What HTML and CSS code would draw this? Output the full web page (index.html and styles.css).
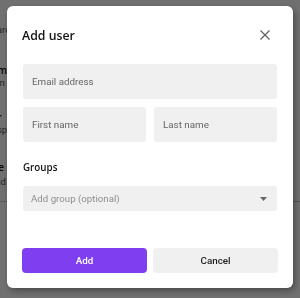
FILE: index.html
```html
<!DOCTYPE html>
<html lang="en">

<head>
    <meta charset="UTF-8" />
    <meta name="viewport" content="width=device-width, initial-scale=1.0" />
    <title>Add user</title>
    <link rel="stylesheet" href="styles.css">
</head>

<body>
    <!-- Page behind the dialog -->
    <div class="page">
        <div class="row first">
            <div class="row-sub">Share</div>
        </div>
        <div class="row">
            <div class="row-title">Tem</div>
            <div class="row-sub">Man</div>
        </div>
        <div class="row">
            <div class="row-title">Ser</div>
            <div class="row-sub">Resp</div>
        </div>
        <div class="row line">
            <div class="row-title">Use</div>
            <div class="row-sub">Hold</div>
        </div>
    </div>

    <!-- Dialog -->
    <div class="overlay">
        <div class="modal">
            <div class="modal-header">
                <h2 class="modal-title">Add user</h2>
                <button class="close-btn" aria-label="Close">
                    <svg width="10" height="10" viewBox="0 0 10 10">
                        <path d="M0.5 0.5 L9.5 9.5 M9.5 0.5 L0.5 9.5" stroke="#5f5f5f" stroke-width="1.2" fill="none" />
                    </svg>
                </button>
            </div>

            <div class="field">
                <input type="email" class="text-input" placeholder="Email address" />
            </div>
            <div class="field name-row">
                <input type="text" class="text-input" placeholder="First name" />
                <input type="text" class="text-input" placeholder="Last name" />
            </div>

            <div class="group-label">Groups</div>
            <div class="select">
                <span>Add group (optional)</span>
                <svg width="7" height="4" viewBox="0 0 7 4">
                    <path d="M0 0 L7 0 L3.5 4 Z" fill="#666" />
                </svg>
            </div>

            <div class="modal-actions">
                <button class="add-btn">Add</button>
                <button class="cancel-btn">Cancel</button>
            </div>
        </div>
    </div>
</body>

</html>
```

FILE: styles.css
```css
body {
    font-family: Roboto, "Liberation Sans", sans-serif;
    background-color: #ffffff;
    margin: 0;
    padding: 0;
    width: 300px;
    height: 298px;
    overflow: hidden;
}

/* background list, mostly hidden by the dialog */
.page {
    margin-left: -14px;
    padding-top: 23px;
    width: 314px;
}

.row {
    margin-top: 22px;
}

.row.first {
    margin-top: 0;
}

.row.first + .row {
    margin-top: 28px;
}

.row.line {
    margin-top: 25px;
    padding-bottom: 11px;
    border-bottom: 1px solid #c8c8c8;
}

.row-title {
    font-family: "Open Sans", sans-serif;
    font-weight: 600;
    font-size: 10px;
    line-height: 12px;
    color: #111;
}

.row-sub {
    font-size: 9.5px;
    line-height: 13px;
    color: #555;
}

.row.line .row-sub {
    line-height: 17px;
}

.overlay {
    position: fixed;
    inset: 0;
    background: rgba(0, 0, 0, 0.56);
    padding: 6px 7px 10px;
}

.modal {
    background: white;
    border-radius: 6px;
    box-shadow: 2px 3px 6px rgba(0, 0, 0, 0.35);
    width: 286px;
    height: 282px;
    box-sizing: border-box;
    padding: 17px 16px 15px;
    display: flex;
    flex-direction: column;
}

.modal-header {
    display: flex;
    align-items: center;
    justify-content: space-between;
    height: 24px;
}

.modal-title {
    font-family: "Open Sans", sans-serif;
    font-weight: 600;
    font-size: 12.3px;
    color: #141414;
    margin: 0 0 0 -1px;
}

.close-btn {
    background: none;
    border: none;
    padding: 0;
    margin-right: 7px;
    display: flex;
    cursor: pointer;
}

.field {
    margin-top: 17px;
}

.field + .field {
    margin-top: 8px;
}

.name-row {
    display: flex;
    gap: 8px;
}

.text-input {
    width: 100%;
    height: 35px;
    box-sizing: border-box;
    border: none;
    border-radius: 3px;
    background: #f0f0f0;
    padding: 0 9px;
    font-family: Roboto, sans-serif;
    font-size: 9.8px;
    outline: none;
}

.text-input::placeholder {
    color: #666;
}

.group-label {
    font-family: "Open Sans", sans-serif;
    font-weight: 600;
    font-size: 9.8px;
    color: #141414;
    margin-top: 17px;
    line-height: 18px;
}

.select {
    margin-top: 9px;
    height: 25px;
    border-radius: 3px;
    background: #f0f0f0;
    display: flex;
    align-items: center;
    justify-content: space-between;
    padding: 0 10px 0 8px;
    font-size: 9.7px;
    color: #8f8f8f;
}

.modal-actions {
    margin-top: auto;
    display: flex;
    gap: 6px;
}

.add-btn,
.cancel-btn {
    flex: 1;
    height: 25px;
    border: none;
    border-radius: 4px;
    font-family: Roboto, sans-serif;
    font-weight: 500;
    font-size: 9.8px;
    cursor: pointer;
}

.add-btn {
    background-color: #7f3ff0;
    color: white;
    margin-left: -1px;
}

.cancel-btn {
    background-color: #f0f0f0;
    color: #222;
    margin-right: -1px;
}
```
